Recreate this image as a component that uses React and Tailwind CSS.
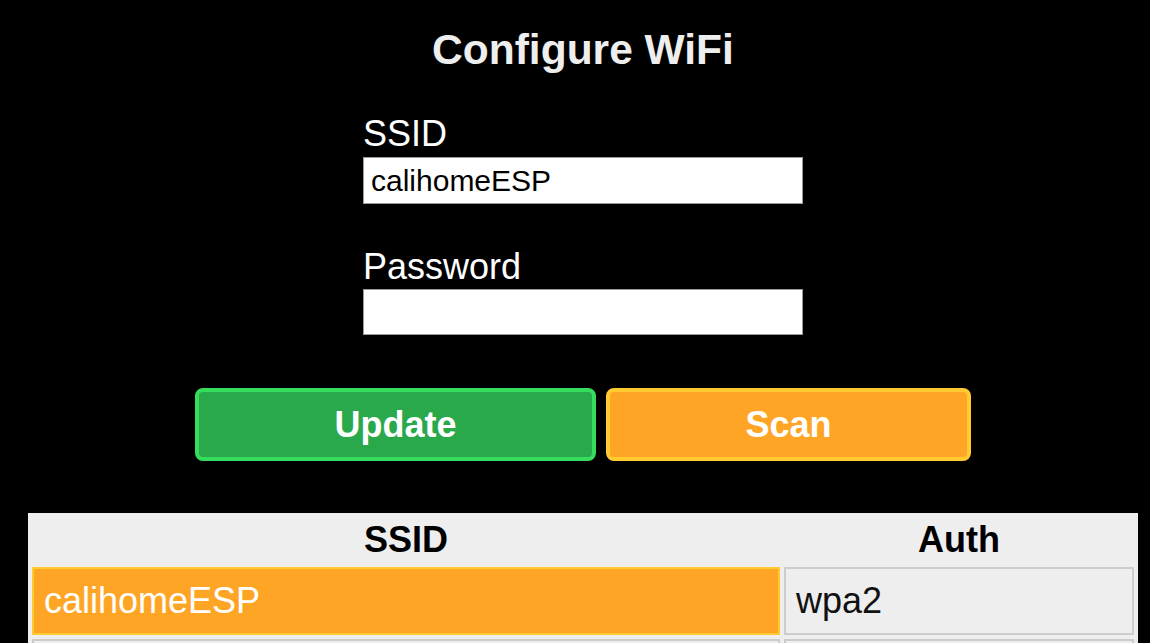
// App.jsx
import React from 'react';

const networks = [
  { ssid: 'calihomeESP', auth: 'wpa2', selected: true },
  { ssid: '', auth: '', selected: false },
];

const App = () => {
  return (
    <div className="min-h-screen bg-black font-['Liberation_Sans',Arial,sans-serif]">
      <div className="ml-[28px] w-[1110px] pt-[26px]">
        {/* Title */}
        <h1 className="text-center text-[42.5px] leading-[48px] font-bold text-[#eee]">
          Configure WiFi
        </h1>

        {/* Credentials */}
        <form className="mx-auto mt-[40px] w-[440px]">
          <label className="block text-[36px] leading-[40px] text-white">SSID</label>
          <input
            className="mt-[3px] block h-[47px] w-full border border-[#999] bg-white px-[7px] text-[30px] text-black outline-none"
            defaultValue="calihomeESP"
          />
          <label className="mt-[43px] block text-[36px] leading-[40px] text-white">
            Password
          </label>
          <input
            type="password"
            className="mt-[2px] block h-[46px] w-full border border-[#999] bg-white px-[7px] text-[30px] text-black outline-none"
          />
        </form>

        {/* Actions */}
        <div className="mt-[53px] flex justify-center gap-[10px]">
          <button className="h-[73px] w-[401px] rounded-[8px] border-4 border-[#36dc5c] bg-[#29a84c] text-[36px] leading-[40px] font-bold text-white">
            Update
          </button>
          <button className="h-[73px] w-[365px] rounded-[8px] border-4 border-[#ffcb30] bg-[#ffa526] text-[36px] leading-[40px] font-bold text-white">
            Scan
          </button>
        </div>

        {/* Scan results */}
        <table className="mt-[52px] w-full table-fixed border-separate border-spacing-1 bg-[#eee]">
          <thead>
            <tr>
              <th className="w-[748px] py-[3px] text-[36px] leading-[40px] font-bold text-black">
                SSID
              </th>
              <th className="w-[350px] py-[3px] text-[36px] leading-[40px] font-bold text-black">
                Auth
              </th>
            </tr>
          </thead>
          <tbody>
            {networks.map((n, i) => (
              <tr key={i}>
                <td
                  className={
                    n.selected
                      ? 'h-[68px] border-2 border-[#ffcb30] bg-[#ffa526] px-[10px] py-[12px] text-left text-[36px] leading-[40px] text-white'
                      : 'h-[68px] border-2 border-[#ccc] bg-[#eee] px-[10px] py-[12px] text-left text-[36px] leading-[40px] text-[#111]'
                  }
                >
                  {n.ssid}
                </td>
                <td className="h-[68px] border-2 border-[#ccc] bg-[#eee] px-[10px] py-[12px] text-left text-[36px] leading-[40px] text-[#111]">
                  {n.auth}
                </td>
              </tr>
            ))}
          </tbody>
        </table>
      </div>
    </div>
  );
};

export default App;
